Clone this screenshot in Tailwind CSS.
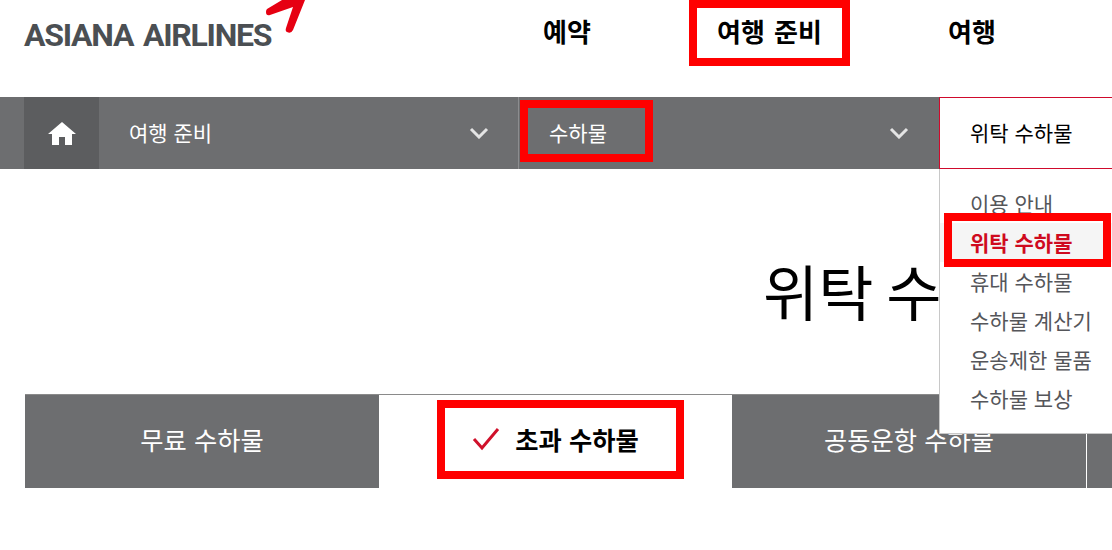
<!DOCTYPE html>
<html lang="ko">

<head>
  <meta charset="UTF-8" />
  <title>위탁 수하물</title>
  <script src="https://cdn.jsdelivr.net/npm/@tailwindcss/browser@4"></script>
</head>

<body class="relative w-[1112px] h-[550px] overflow-hidden bg-white text-black font-['Noto_Sans_CJK_KR','Liberation_Sans',sans-serif]">

  <!-- Header -->
  <header class="relative h-[97px]">
    <div class="absolute left-[24px] top-[14px] text-[32px] leading-[42px] font-bold tracking-[-1.25px] [word-spacing:3px] text-[#4b4f53] font-['Roboto',sans-serif] whitespace-nowrap">ASIANA AIRLINES</div>
    <svg class="absolute left-[260px] top-0 w-[50px] h-[40px]" viewBox="0 0 50 40">
      <path d="M7 9 L22 0 L45 0 L33 30 Q31 34 27 32 Q25 31 26 28 L33 7 L10 15 Q6 16 6 12 Q6 10 7 9 Z" fill="#e60012"/>
    </svg>
    <nav class="absolute left-[543px] top-[12px] text-[26px] leading-[38px] font-bold whitespace-nowrap [word-spacing:2px]">
      <a class="absolute left-0">예약</a>
      <a class="absolute left-[174px]">여행 준비</a>
      <a class="absolute left-[405px]">여행</a>
    </nav>
  </header>

  <!-- Breadcrumb bar -->
  <div class="flex h-[72px] bg-[#6d6e70] pl-[24px] text-[21px] text-white">
    <a class="flex w-[75px] items-center justify-center bg-[#5c5d5f]">
      <svg class="w-[30px] h-[26px]" viewBox="0 0 30 26">
        <path d="M15 2 L29 14 L25 14 L25 25 L18 25 L18 17 L12 17 L12 25 L5 25 L5 14 L1 14 Z" fill="#fff"/>
      </svg>
    </a>
    <div class="flex w-[420px] items-center justify-between border-r border-[#8c8d8f] pl-[30px] pr-[29px]">
      <span>여행 준비</span>
      <svg class="w-[20px] h-[12px]" viewBox="0 0 20 12"><path d="M2 2 L10 10 L18 2" fill="none" stroke="#e4e4e4" stroke-width="3"/></svg>
    </div>
    <div class="flex w-[420px] items-center justify-between pl-[30px] pr-[30px]">
      <span>수하물</span>
      <svg class="w-[20px] h-[12px]" viewBox="0 0 20 12"><path d="M2 2 L10 10 L18 2" fill="none" stroke="#e4e4e4" stroke-width="3"/></svg>
    </div>
  </div>

  <!-- Title -->
  <h1 class="h-[225px] pl-[763px] pt-[76px] text-[60px] leading-[90px] font-normal whitespace-nowrap [word-spacing:-4px]">위탁 수하물</h1>

  <!-- Tabs -->
  <div class="ml-[25px] flex h-[94px] text-[25.3px] leading-[36px] border-t border-[#8a8a8a]">
    <a class="flex w-[354px] items-center justify-center bg-[#6d6e70] pb-[6px] text-white">무료 수하물</a>
    <a class="flex w-[353px] items-center justify-center gap-[15px] bg-white pb-[6px] font-bold">
      <svg class="w-[28px] h-[24px]" viewBox="0 0 28 24"><path d="M2 12 L10 21 L26 2" fill="none" stroke="#d0112b" stroke-width="3"/></svg>
      <span>초과 수하물</span>
    </a>
    <a class="flex w-[355px] items-center justify-center border-r border-white bg-[#6d6e70] pb-[6px] text-white">공동운항 수하물</a>
    <a class="w-[25px] bg-[#6d6e70]"></a>
  </div>

  <!-- Dropdown -->
  <div class="absolute left-[939px] top-[97px] w-[173px] h-[337px] bg-white border-l border-b border-[#c8c8c8]">
    <div class="flex h-[72px] items-center -ml-px pl-[30px] border border-r-0 border-[#cf0a2c] text-[21px] text-black">위탁 수하물</div>
    <ul class="pt-[15px] text-[21px] leading-[39px] text-[#55565a]">
      <li class="pl-[30px]">이용 안내</li>
      <li class="pl-[30px] bg-[#f5f5f5] font-bold text-[#cf0a1e]">위탁 수하물</li>
      <li class="pl-[30px]">휴대 수하물</li>
      <li class="pl-[30px]">수하물 계산기</li>
      <li class="pl-[30px]">운송제한 물품</li>
      <li class="pl-[30px]">수하물 보상</li>
    </ul>
  </div>

  <!-- Highlight boxes -->
  <div class="absolute left-[689px] top-0 w-[161px] h-[66px] border-[8px] border-[#ff0000]"></div>
  <div class="absolute left-[520px] top-[100px] w-[133px] h-[62px] border-[8px] border-[#ff0000]"></div>
  <div class="absolute left-[944px] top-[213px] w-[167px] h-[54px] border-[8px] border-[#ff0000]"></div>
  <div class="absolute left-[437px] top-[400px] w-[247px] h-[79px] border-[8px] border-[#ff0000]"></div>

</body>

</html>
